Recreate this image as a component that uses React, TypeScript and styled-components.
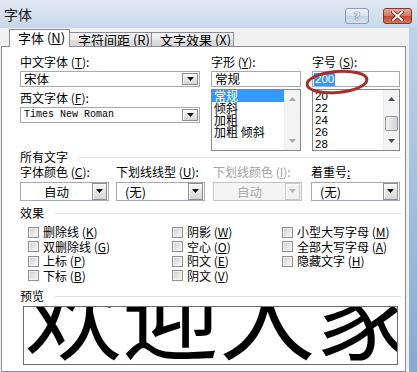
import React from 'react';
import styled, { createGlobalStyle, css } from 'styled-components';

const CJK = `"Noto Sans CJK SC", "Noto Sans", sans-serif`;

const GlobalStyle = createGlobalStyle`
  html, body { margin: 0; padding: 0; }
  body {
    width: 417px; height: 372px; overflow: hidden;
    font-family: ${CJK};
    font-size: 12px; color: #000;
  }
  * { box-sizing: border-box; }
`;

const Window = styled.div`
  width: 417px;
  height: 372px;
  display: flex;
  flex-direction: column;
  overflow: hidden;
  background: linear-gradient(#c4d6eb, #86a9d2);
`;

const TitleBar = styled.div`
  height: 28px;
  flex: none;
  display: flex;
  align-items: flex-start;
  padding: 7px 5px 0 4px;
  background: linear-gradient(#e2eaf4, #c6d7ea);
`;

const Title = styled.span`
  flex: 1;
  font-size: 14px;
  line-height: 14px;
  color: #1b1b1b;
`;

const CaptionButton = styled.div<{ $variant: 'help' | 'close' }>`
  height: 16px;
  margin-top: 1px;
  border-radius: 3px;
  display: flex;
  align-items: center;
  justify-content: center;
  ${(p) =>
    p.$variant === 'help'
      ? css`
          width: 24px;
          margin-right: 14px;
          border: 1px solid #8c9cb3;
          background: linear-gradient(#eef3f9, #d5e0ed 50%, #c3d3e6 51%, #d4e1ef);
        `
      : css`
          width: 29px;
          border: 1px solid #7d3b33;
          background: linear-gradient(#e9a99a, #d47660 50%, #c24b35 51%, #d6745c);
        `}
`;

const HelpGlyph = styled.span`
  font-family: "DejaVu Sans", sans-serif;
  font-weight: bold;
  font-size: 11px;
  line-height: 11px;
  color: #f4f7fb;
  text-shadow: 0 0 1px #3d4c63, 0 0 1px #3d4c63;
`;

const Client = styled.div`
  flex: 1;
  margin-right: 8px;
  background: #f0f0f0;
  display: flex;
  flex-direction: column;
  padding-top: 1px;
  min-height: 0;
`;

const TabStrip = styled.div`
  height: 17px;
  flex: none;
  display: flex;
  align-items: flex-end;
  padding-left: 9px;
`;

const Tab = styled.div<{ $active?: boolean; $width: number }>`
  width: ${(p) => p.$width}px;
  font-size: 13px;
  white-space: nowrap;
  padding-left: 8px;
  border: 1px solid #898c95;
  border-bottom: none;
  ${(p) =>
    p.$active
      ? css`
          height: 18px;
          line-height: 16px;
          margin-bottom: -1px;
          position: relative;
          z-index: 1;
          background: #ffffff;
        `
      : css`
          height: 14px;
          line-height: 13px;
          margin-left: -1px;
          background: linear-gradient(#f3f3f3, #ebebeb 50%, #dedede 51%, #d7d7d7);
        `}
`;

const Key = styled.span`
  text-decoration: underline;
`;

const Panel = styled.div`
  flex: 1;
  margin: 0 3px 0 1px;
  border: 1px solid #898c95;
  background: #ffffff;
  padding: 7px 4px 0 18px;
  display: flex;
  flex-direction: column;
  min-height: 0;
`;

const TopGrid = styled.div`
  display: grid;
  grid-template-columns: 180px 90px 88px;
  column-gap: 11px;
`;

const Column = styled.div`
  display: flex;
  flex-direction: column;
  position: relative;
`;

const FieldLabel = styled.div<{ $gap?: number; $disabled?: boolean }>`
  height: 16px;
  line-height: 16px;
  font-size: 12px;
  white-space: nowrap;
  margin-top: ${(p) => p.$gap ?? 0}px;
  color: ${(p) => (p.$disabled ? '#a3a3a3' : '#000')};
`;

const EditCombo = styled.div`
  height: 16px;
  margin-top: 1px;
  border: 1px solid #a6abb3;
  background: #fff;
  display: flex;
  align-items: center;
  padding: 0 1px 0 3px;
`;

const FieldText = styled.span<{ $mono?: boolean }>`
  flex: 1;
  white-space: nowrap;
  font-size: ${(p) => (p.$mono ? '10px' : '12.5px')};
  font-family: ${(p) => (p.$mono ? '"Liberation Mono", monospace' : CJK)};
  line-height: 14px;
`;

const DropButton = styled.div<{ $tall?: boolean; $disabled?: boolean }>`
  width: ${(p) => (p.$tall ? 15 : 16)}px;
  height: ${(p) => (p.$tall ? 17 : 12)}px;
  flex: none;
  display: flex;
  align-items: center;
  justify-content: center;
  border: 1px solid ${(p) => (p.$disabled ? '#c9c9c9' : '#8d8d8d')};
  background: ${(p) =>
    p.$disabled ? '#f1f1f1' : 'linear-gradient(#fbfbfb, #e6e6e6 50%, #d6d6d6)'};
  box-shadow: inset 1px 1px 0 #ffffff;
`;

const Arrow = ({ color = '#111', size = 7 }: { color?: string; size?: number }) => (
  <svg width={size} height={Math.ceil(size / 2) + 1} viewBox={`0 0 ${size} ${Math.ceil(size / 2) + 1}`}>
    <polygon points={`0,0 ${size},0 ${size / 2},${Math.ceil(size / 2)}`} fill={color} />
  </svg>
);

const UpArrow = ({ color }: { color: string }) => (
  <svg width="7" height="4" viewBox="0 0 7 4">
    <polygon points="0,4 7,4 3.5,0" fill={color} />
  </svg>
);

const TextBox = styled.div`
  height: 16px;
  margin-top: 1px;
  border: 1px solid #a6abb3;
  background: #fff;
  display: flex;
  align-items: center;
  padding-left: 1px;
`;

const Selected = styled.span<{ $digits?: boolean }>`
  background: #3399ff;
  color: #fff;
  font-family: ${(p) => (p.$digits ? '"Liberation Sans", sans-serif' : CJK)};
  font-size: ${(p) => (p.$digits ? '11.5px' : '12.5px')};
  line-height: 13px;
  padding: 0 1px;
`;

const PlainValue = styled.span`
  font-size: 12.5px;
  line-height: 14px;
  padding-left: 2px;
`;

const ListBox = styled.div`
  height: 62px;
  margin-top: 2px;
  border: 1px solid #828790;
  background: #fff;
  display: flex;
  overflow: hidden;
`;

const Items = styled.div`
  flex: 1;
  display: flex;
  flex-direction: column;
`;

const Item = styled.div<{ $selected?: boolean; $digits?: boolean }>`
  height: 12px;
  flex: none;
  line-height: 12px;
  padding-left: 2px;
  white-space: pre;
  font-family: ${(p) => (p.$digits ? '"Liberation Sans", sans-serif' : CJK)};
  font-size: ${(p) => (p.$digits ? '11.5px' : '12px')};
  background: ${(p) => (p.$selected ? '#3399ff' : 'transparent')};
  color: ${(p) => (p.$selected ? '#fff' : '#000')};
`;

const ScrollBar = styled.div`
  width: 16px;
  flex: none;
  display: flex;
  flex-direction: column;
  background: #f3f3f3;
  border-left: 1px solid #ececec;
`;

const ScrollButton = styled.div`
  height: 17px;
  flex: none;
  display: flex;
  align-items: center;
  justify-content: center;
`;

const Track = styled.div`
  flex: 1;
  display: flex;
  flex-direction: column;
`;

const Thumb = styled.div`
  height: 15px;
  margin: 9px 1px 0 1px;
  border: 1px solid #979797;
  border-radius: 2px;
  background: linear-gradient(to right, #f3f3f3, #e2e2e2 50%, #d3d3d3);
`;

const Ellipse = styled.svg`
  position: absolute;
  left: -8px;
  top: 14px;
  pointer-events: none;
`;

const GroupHeader = styled.div<{ $gap: number }>`
  height: 14px;
  margin-top: ${(p) => p.$gap}px;
  display: flex;
  align-items: center;
  font-size: 12px;
  line-height: 14px;
  white-space: nowrap;
`;

const Rule = styled.div`
  flex: 1;
  height: 1px;
  margin-left: 11px;
  background: #dcdfe3;
`;

const FourGrid = styled.div`
  display: grid;
  grid-template-columns: 96px 97px 98px 89px;
`;

const DropList = styled.div<{ $disabled?: boolean }>`
  width: 89px;
  height: 19px;
  margin-top: 2px;
  border: 1px solid ${(p) => (p.$disabled ? '#c4c4c4' : '#a6abb3')};
  background: ${(p) => (p.$disabled ? '#f4f4f4' : '#fff')};
  display: flex;
  align-items: center;
  padding-right: 1px;
`;

const DropText = styled.span<{ $center?: boolean; $disabled?: boolean }>`
  flex: 1;
  font-size: 12.5px;
  line-height: 15px;
  white-space: nowrap;
  text-align: ${(p) => (p.$center ? 'center' : 'left')};
  padding-left: ${(p) => (p.$center ? 0 : 8)}px;
  color: ${(p) => (p.$disabled ? '#a8a8a8' : '#000')};
`;

const CheckGrid = styled.div`
  margin-top: 5px;
  padding-left: 8px;
  display: grid;
  grid-template-columns: 144px 110px 1fr;
  grid-template-rows: repeat(4, 14.5px);
  grid-auto-flow: column;
`;

const CheckItem = styled.label`
  display: flex;
  align-items: center;
  gap: 4px;
  height: 14.5px;
`;

const CheckText = styled.span`
  display: block;
  height: 14px;
  font-size: 12px;
  line-height: 14px;
  white-space: nowrap;
`;

const Box = styled.span`
  width: 11px;
  height: 11px;
  flex: none;
  border: 1px solid #8f8f8f;
  background: linear-gradient(135deg, #cbcbcb, #eeeeee 70%, #f7f7f7);
  box-shadow: inset 0 0 0 1px #f2f2f2;
`;

const PreviewBox = styled.div`
  width: 375px;
  height: 59px;
  margin: 3px 0 0 3px;
  border: 1px solid #6b6b6b;
  background: #fff;
  overflow: hidden;
`;

const PreviewText = styled.div`
  margin-top: -46px;
  padding-left: 1px;
  font-family: ${CJK};
  font-size: 97px;
  line-height: 97px;
  white-space: nowrap;
  color: #000;
`;

const Check = ({ children }: { children: React.ReactNode }) => (
  <CheckItem>
    <Box />
    <CheckText>{children}</CheckText>
  </CheckItem>
);

const effects: Array<[string, string]> = [
  ['删除线', 'K'],
  ['双删除线', 'G'],
  ['上标', 'P'],
  ['下标', 'B'],
  ['阴影', 'W'],
  ['空心', 'O'],
  ['阳文', 'E'],
  ['阴文', 'V'],
  ['小型大写字母', 'M'],
  ['全部大写字母', 'A'],
  ['隐藏文字', 'H'],
];

export default function App() {
  return (
    <>
      <GlobalStyle />
      <Window>
        <TitleBar>
          <Title>字体</Title>
          <CaptionButton $variant="help">
            <HelpGlyph>?</HelpGlyph>
          </CaptionButton>
          <CaptionButton $variant="close">
            <svg width="13" height="10" viewBox="0 0 13 10">
              <path d="M2 1 L11 9 M11 1 L2 9" stroke="#6e2a20" strokeWidth="3.6" strokeLinecap="square" />
              <path d="M2 1 L11 9 M11 1 L2 9" stroke="#ffffff" strokeWidth="2" strokeLinecap="square" />
            </svg>
          </CaptionButton>
        </TitleBar>
        <Client>
          <TabStrip>
            <Tab $active $width={61}>
              字体 (<Key>N</Key>)
            </Tab>
            <Tab $width={83}>
              字符间距 (<Key>R</Key>)
            </Tab>
            <Tab $width={83}>
              文字效果 (<Key>X</Key>)
            </Tab>
          </TabStrip>
          <Panel>
            <TopGrid>
              <Column>
                <FieldLabel>
                  中文字体 (<Key>T</Key>):
                </FieldLabel>
                <EditCombo>
                  <FieldText>宋体</FieldText>
                  <DropButton>
                    <Arrow />
                  </DropButton>
                </EditCombo>
                <FieldLabel $gap={3}>
                  西文字体 (<Key>F</Key>):
                </FieldLabel>
                <EditCombo>
                  <FieldText $mono>Times New Roman</FieldText>
                  <DropButton>
                    <Arrow />
                  </DropButton>
                </EditCombo>
              </Column>
              <Column>
                <FieldLabel>
                  字形 (<Key>Y</Key>):
                </FieldLabel>
                <TextBox>
                  <PlainValue>常规</PlainValue>
                </TextBox>
                <ListBox>
                  <Items>
                    <Item $selected>常规</Item>
                    <Item>倾斜</Item>
                    <Item>加粗</Item>
                    <Item>加粗 倾斜</Item>
                  </Items>
                  <ScrollBar>
                    <ScrollButton>
                      <UpArrow color="#a9a9a9" />
                    </ScrollButton>
                    <Track />
                    <ScrollButton>
                      <Arrow color="#a9a9a9" />
                    </ScrollButton>
                  </ScrollBar>
                </ListBox>
              </Column>
              <Column>
                <FieldLabel>
                  字号 (<Key>S</Key>):
                </FieldLabel>
                <TextBox>
                  <Selected $digits>200</Selected>
                </TextBox>
                <ListBox>
                  <Items>
                    {['20', '22', '24', '26', '28'].map((s) => (
                      <Item key={s} $digits>
                        {s}
                      </Item>
                    ))}
                  </Items>
                  <ScrollBar>
                    <ScrollButton>
                      <UpArrow color="#4a4a4a" />
                    </ScrollButton>
                    <Track>
                      <Thumb />
                    </Track>
                    <ScrollButton>
                      <Arrow color="#4a4a4a" />
                    </ScrollButton>
                  </ScrollBar>
                </ListBox>
                <Ellipse width="66" height="28" viewBox="0 0 66 28">
                  <ellipse
                    cx="33"
                    cy="14"
                    rx="30"
                    ry="10.5"
                    transform="rotate(-5 33 14)"
                    fill="none"
                    stroke="#a3302d"
                    strokeWidth="3"
                  />
                </Ellipse>
              </Column>
            </TopGrid>

            <GroupHeader $gap={-1}>
              所有文字
              <Rule />
            </GroupHeader>
            <FourGrid>
              <div>
                <FieldLabel>
                  字体颜色 (<Key>C</Key>):
                </FieldLabel>
                <DropList>
                  <DropText $center>自动</DropText>
                  <DropButton $tall>
                    <Arrow />
                  </DropButton>
                </DropList>
              </div>
              <div>
                <FieldLabel>
                  下划线线型 (<Key>U</Key>):
                </FieldLabel>
                <DropList>
                  <DropText>(无)</DropText>
                  <DropButton $tall>
                    <Arrow />
                  </DropButton>
                </DropList>
              </div>
              <div>
                <FieldLabel $disabled>
                  下划线颜色 (<Key>I</Key>):
                </FieldLabel>
                <DropList $disabled>
                  <DropText $center $disabled>
                    自动
                  </DropText>
                  <DropButton $tall $disabled>
                    <Arrow color="#b5b5b5" />
                  </DropButton>
                </DropList>
              </div>
              <div>
                <FieldLabel>
                  着重号<Key>:</Key>
                </FieldLabel>
                <DropList>
                  <DropText>(无)</DropText>
                  <DropButton $tall>
                    <Arrow />
                  </DropButton>
                </DropList>
              </div>
            </FourGrid>

            <GroupHeader $gap={5}>
              效果
              <Rule />
            </GroupHeader>
            <CheckGrid>
              {effects.map(([label, key]) => (
                <Check key={label}>
                  {label} (<Key>{key}</Key>)
                </Check>
              ))}
            </CheckGrid>

            <GroupHeader $gap={6}>
              预览
              <Rule />
            </GroupHeader>
            <PreviewBox>
              <PreviewText>欢迎大家</PreviewText>
            </PreviewBox>
          </Panel>
        </Client>
      </Window>
    </>
  );
}
